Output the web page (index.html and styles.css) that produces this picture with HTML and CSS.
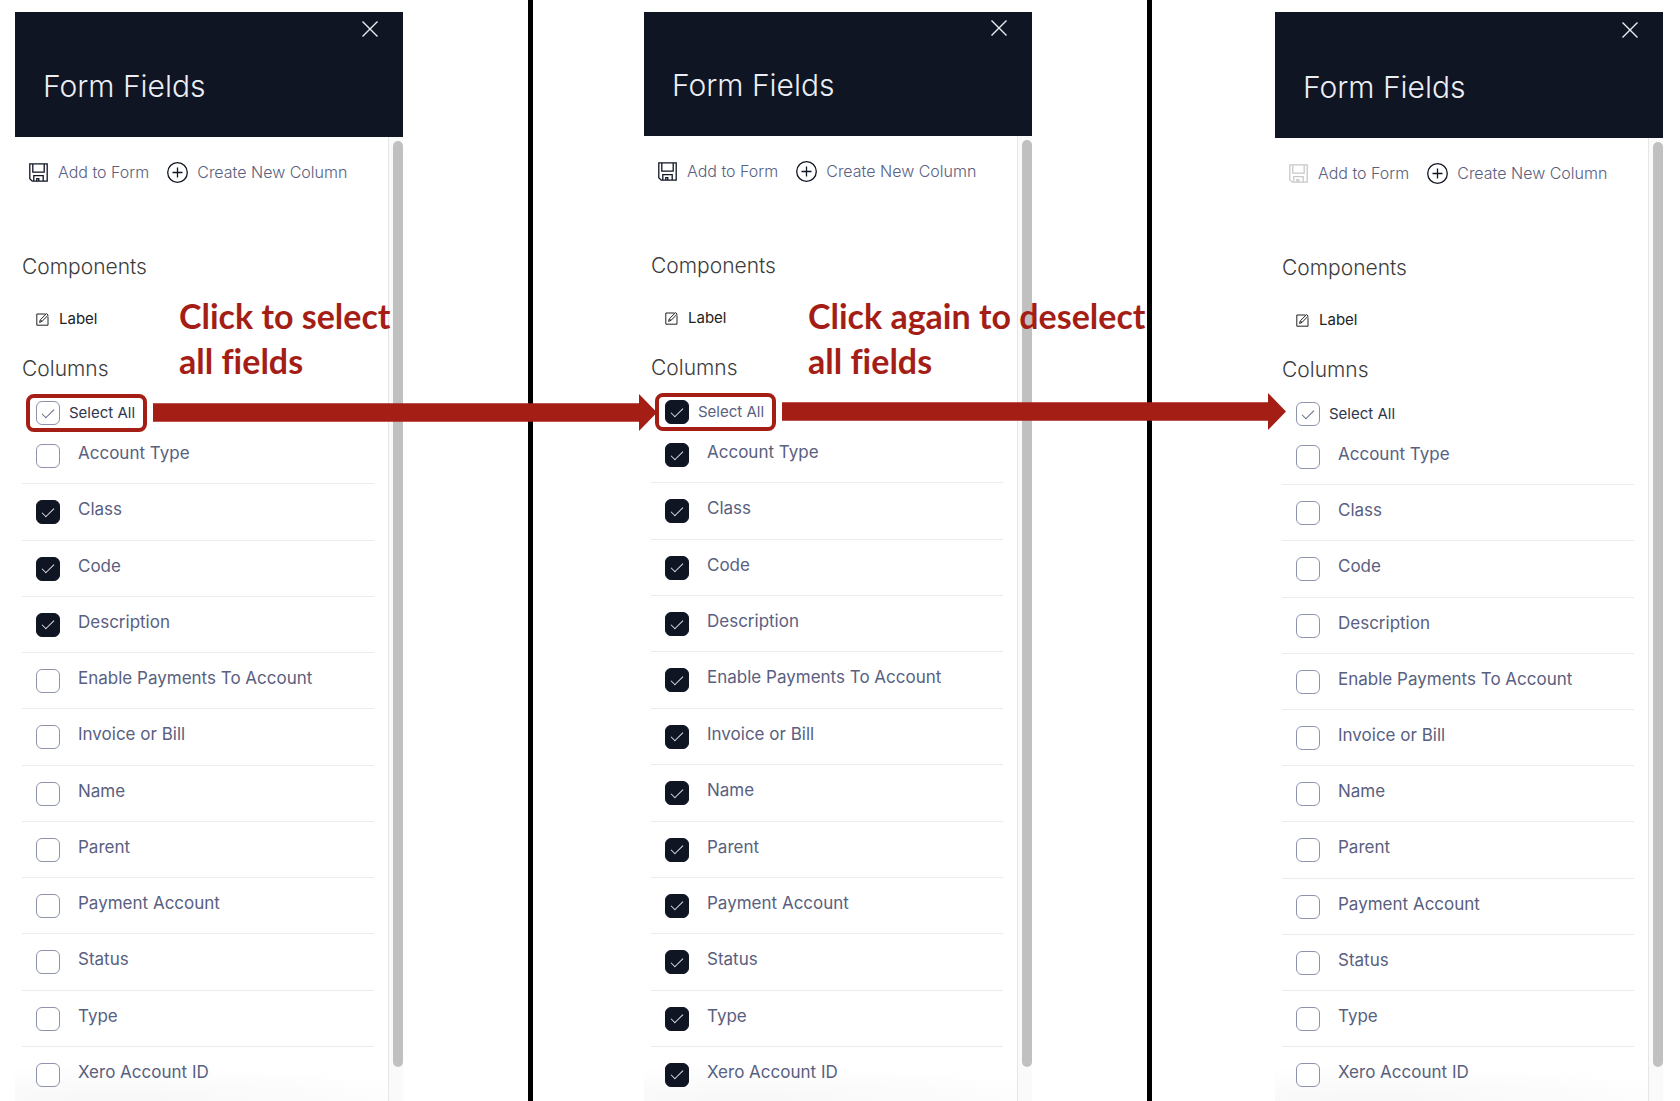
FILE: index.html
```html
<!DOCTYPE html>
<html lang="en">
<head>
<meta charset="utf-8">
<meta name="viewport" content="width=device-width, initial-scale=1">
<title>Form Fields</title>
<link rel="stylesheet" href="styles.css">
</head>
<body>
<svg class="sprite" aria-hidden="true">
  <symbol id="close" viewBox="0 0 16 16"><path stroke-width="1.4" d="M.5.5l15 15M15.5.5l-15 15"/></symbol>
  <symbol id="save" viewBox="0 0 19 19"><path stroke-width="1.3" d="M.8.8h17.4v17.4H3.2L.8 15.8zM3.8.8v8.4h11.4V.8M4.8 18.2v-5.6h9.4v5.6M7.8 18.2v-2.6h2v2.6"/></symbol>
  <symbol id="plus" viewBox="0 0 21 21"><g stroke-width="1.3"><circle cx="10.5" cy="10.5" r="9.8"/><path d="M10.5 5.5v10M5.5 10.5h10"/></g></symbol>
  <symbol id="edit" viewBox="0 0 13 13"><path d="M9.5 1H.8v11.2H12V3.6M3.6 9.4l.7-2.6L10.6.6l1.6 1.5L6 8.4zM4.6 7l1.3 1.3"/></symbol>
</svg>
<main class="steps">
  <section class="step step-first">
    <div class="panel">
      <header class="panel-header">
        <button class="close" type="button" aria-label="Close"><svg><use href="#close"/></svg></button>
        <h1>Form Fields</h1>
      </header>
      <div class="panel-body">
        <div class="content">
          <div class="toolbar">
            <button type="button"><svg class="icon-save"><use href="#save"/></svg>Add to Form</button>
            <button type="button"><svg class="icon-plus"><use href="#plus"/></svg>Create New Column</button>
          </div>
          <h2>Components</h2>
          <p class="component"><svg><use href="#edit"/></svg>Label</p>
          <h2>Columns</h2>
          <div class="select-all highlighted">
            <label><input type="checkbox" class="hint">Select All</label>
            <span class="arrow"></span>
          </div>
          <ul class="fields">
            <li><label><input type="checkbox">Account Type</label></li>
            <li><label><input type="checkbox" checked>Class</label></li>
            <li><label><input type="checkbox" checked>Code</label></li>
            <li><label><input type="checkbox" checked>Description</label></li>
            <li><label><input type="checkbox">Enable Payments To Account</label></li>
            <li><label><input type="checkbox">Invoice or Bill</label></li>
            <li><label><input type="checkbox">Name</label></li>
            <li><label><input type="checkbox">Parent</label></li>
            <li><label><input type="checkbox">Payment Account</label></li>
            <li><label><input type="checkbox">Status</label></li>
            <li><label><input type="checkbox">Type</label></li>
            <li><label><input type="checkbox">Xero Account ID</label></li>
          </ul>
        </div>
        <div class="scrollbar"><span></span></div>
      </div>
      <p class="note">Click to select<br>all fields</p>
    </div>
  </section>
  <section class="step step-second">
    <div class="panel">
      <header class="panel-header">
        <button class="close" type="button" aria-label="Close"><svg><use href="#close"/></svg></button>
        <h1>Form Fields</h1>
      </header>
      <div class="panel-body">
        <div class="content">
          <div class="toolbar">
            <button type="button"><svg class="icon-save"><use href="#save"/></svg>Add to Form</button>
            <button type="button"><svg class="icon-plus"><use href="#plus"/></svg>Create New Column</button>
          </div>
          <h2>Components</h2>
          <p class="component"><svg><use href="#edit"/></svg>Label</p>
          <h2>Columns</h2>
          <div class="select-all highlighted">
            <label><input type="checkbox" checked>Select All</label>
            <span class="arrow"></span>
          </div>
          <ul class="fields">
            <li><label><input type="checkbox" checked>Account Type</label></li>
            <li><label><input type="checkbox" checked>Class</label></li>
            <li><label><input type="checkbox" checked>Code</label></li>
            <li><label><input type="checkbox" checked>Description</label></li>
            <li><label><input type="checkbox" checked>Enable Payments To Account</label></li>
            <li><label><input type="checkbox" checked>Invoice or Bill</label></li>
            <li><label><input type="checkbox" checked>Name</label></li>
            <li><label><input type="checkbox" checked>Parent</label></li>
            <li><label><input type="checkbox" checked>Payment Account</label></li>
            <li><label><input type="checkbox" checked>Status</label></li>
            <li><label><input type="checkbox" checked>Type</label></li>
            <li><label><input type="checkbox" checked>Xero Account ID</label></li>
          </ul>
        </div>
        <div class="scrollbar"><span></span></div>
      </div>
      <p class="note">Click again to deselect<br>all fields</p>
    </div>
  </section>
  <section class="step step-third">
    <div class="panel">
      <header class="panel-header">
        <button class="close" type="button" aria-label="Close"><svg><use href="#close"/></svg></button>
        <h1>Form Fields</h1>
      </header>
      <div class="panel-body">
        <div class="content">
          <div class="toolbar">
            <button type="button" class="inactive"><svg class="icon-save"><use href="#save"/></svg>Add to Form</button>
            <button type="button"><svg class="icon-plus"><use href="#plus"/></svg>Create New Column</button>
          </div>
          <h2>Components</h2>
          <p class="component"><svg><use href="#edit"/></svg>Label</p>
          <h2>Columns</h2>
          <div class="select-all">
            <label><input type="checkbox" class="hint">Select All</label>
          </div>
          <ul class="fields">
            <li><label><input type="checkbox">Account Type</label></li>
            <li><label><input type="checkbox">Class</label></li>
            <li><label><input type="checkbox">Code</label></li>
            <li><label><input type="checkbox">Description</label></li>
            <li><label><input type="checkbox">Enable Payments To Account</label></li>
            <li><label><input type="checkbox">Invoice or Bill</label></li>
            <li><label><input type="checkbox">Name</label></li>
            <li><label><input type="checkbox">Parent</label></li>
            <li><label><input type="checkbox">Payment Account</label></li>
            <li><label><input type="checkbox">Status</label></li>
            <li><label><input type="checkbox">Type</label></li>
            <li><label><input type="checkbox">Xero Account ID</label></li>
          </ul>
        </div>
        <div class="scrollbar"><span></span></div>
      </div>
    </div>
  </section>
</main>
</body>
</html>
```
FILE: styles.css
```css
:root {
  --navy: #0f1523;
  --slate: #596080;
  --red: #a41e16;
}

* { box-sizing: border-box; }

body {
  margin: 0;
  background: #fff;
  color: var(--slate);
  font: 400 17px/20px Inter, "Open Sans", sans-serif;
}

h1, h2, p, ul { margin: 0; padding: 0; }
h1, h2 { font-weight: 300; }
ul { list-style: none; }
svg { flex: none; fill: none; stroke: currentColor; }
.sprite { display: none; }

button {
  display: flex;
  align-items: center;
  padding: 0;
  border: 0;
  background: none;
  color: inherit;
  font: inherit;
  cursor: pointer;
}

.steps {
  display: grid;
  grid-template-columns: 1fr 624px 1fr;
  min-height: 100vh;
}

.step { display: flex; padding-top: 12px; }
.step-first { padding-left: 15px; }
.step-second {
  padding-left: 111px;
  border: solid #000;
  border-width: 0 5px;
}
.step-third { justify-content: flex-end; padding-right: 17px; }

.panel {
  position: relative;
  display: flex;
  flex-direction: column;
  width: 388px;
}

/* Header */
.panel-header {
  display: flex;
  flex-direction: column;
  justify-content: flex-end;
  height: 125px;
  padding: 0 25px 31px 28px;
  background: var(--navy);
  color: #eceef5;
}
.step-second .panel-header { height: 124px; }
.step-third .panel-header { height: 126px; }
.panel-header h1 { font-size: 30px; line-height: 40px; }
.close { align-self: flex-end; margin-bottom: 29px; }
.close svg { width: 16px; height: 16px; }

/* Body */
.panel-body { display: flex; flex: 1; }
.content {
  display: flex;
  flex: 1;
  flex-direction: column;
  padding-left: 7px;
  background: radial-gradient(350px 36px at 100px 100%, #f7f7f7, #fff) no-repeat bottom / 100% 36px;
}

.toolbar {
  display: flex;
  gap: 18px;
  margin-bottom: 68px;
  padding: 24px 0 0 7px;
  font-size: 16px;
  font-weight: 350;
  line-height: 22px;
  white-space: nowrap;
}
.toolbar svg { color: var(--navy); }
.toolbar .inactive svg { color: #c9c9c9; }
.icon-save { width: 19px; height: 19px; margin-right: 10px; }
.icon-plus { width: 21px; height: 21px; margin-right: 9px; }

h2 { color: #3c3c3c; font-size: 21px; line-height: 32px; }

.component {
  display: flex;
  align-items: center;
  gap: 10px;
  margin: 26px 0 24px;
  padding-left: 14px;
  color: #222;
  font-size: 15px;
}
.component svg { width: 13px; height: 13px; }

.select-all {
  position: relative;
  display: flex;
  align-self: flex-start;
  width: 121px;
  height: 38px;
  margin: 9px 0 -4px 4px;
  padding-left: 10px;
  font-size: 15px;
}
.select-all label { display: flex; align-items: center; gap: 9px; white-space: nowrap; }
.select-all label:has(.hint) { color: #30364c; }
.highlighted { padding-left: 6px; border: 4px solid var(--red); border-radius: 8px; }

input {
  display: grid;
  flex: none;
  place-items: center;
  width: 24px;
  height: 24px;
  margin: 0;
  border: 1px solid #8d93aa;
  border-radius: 6px;
  background: #fff;
  color: var(--slate);
  appearance: none;
}
input:checked { border-color: var(--navy); background: var(--navy); color: #e4e6ee; }
input:checked::before,
.hint::before {
  width: 5px;
  height: 11px;
  margin-bottom: 3px;
  border: solid currentColor;
  border-width: 0 1px 1px 0;
  content: "";
  transform: rotate(45deg);
}

.fields { display: flex; flex: 1; flex-direction: column; margin-right: 14px; }
.fields li { flex: 1 0 56px; padding: 15px 0 0 14px; border-bottom: 1px solid #ececee; }
.fields li:last-child { flex: 0 0 54px; border-bottom: 0; }
.fields label { display: flex; align-items: flex-start; gap: 18px; }
.fields input { margin-top: 1px; }

.scrollbar {
  display: flex;
  width: 15px;
  padding: 4px 0 34px 4px;
  border-left: 1px solid #e6e6e6;
  background: #fafafa;
}
.scrollbar span { flex: 1; border-radius: 5px; background: #c0c0c0; }

/* Annotations laid over the panels */
.note {
  position: absolute;
  top: 281px;
  left: 164px;
  z-index: 1;
  color: var(--red);
  font: 700 34px/45px Lato, sans-serif;
  font-variant-ligatures: none;
  white-space: nowrap;
}
.arrow {
  position: absolute;
  top: -4px;
  left: 123px;
  z-index: 1;
  width: calc(50vw - 336px);
  height: 37px;
  background: var(--red);
  clip-path: polygon(0 25%, calc(100% - 18px) 25%, calc(100% - 18px) 0, 100% 50%, calc(100% - 18px) 100%, calc(100% - 18px) 75%, 0 75%);
}
```
